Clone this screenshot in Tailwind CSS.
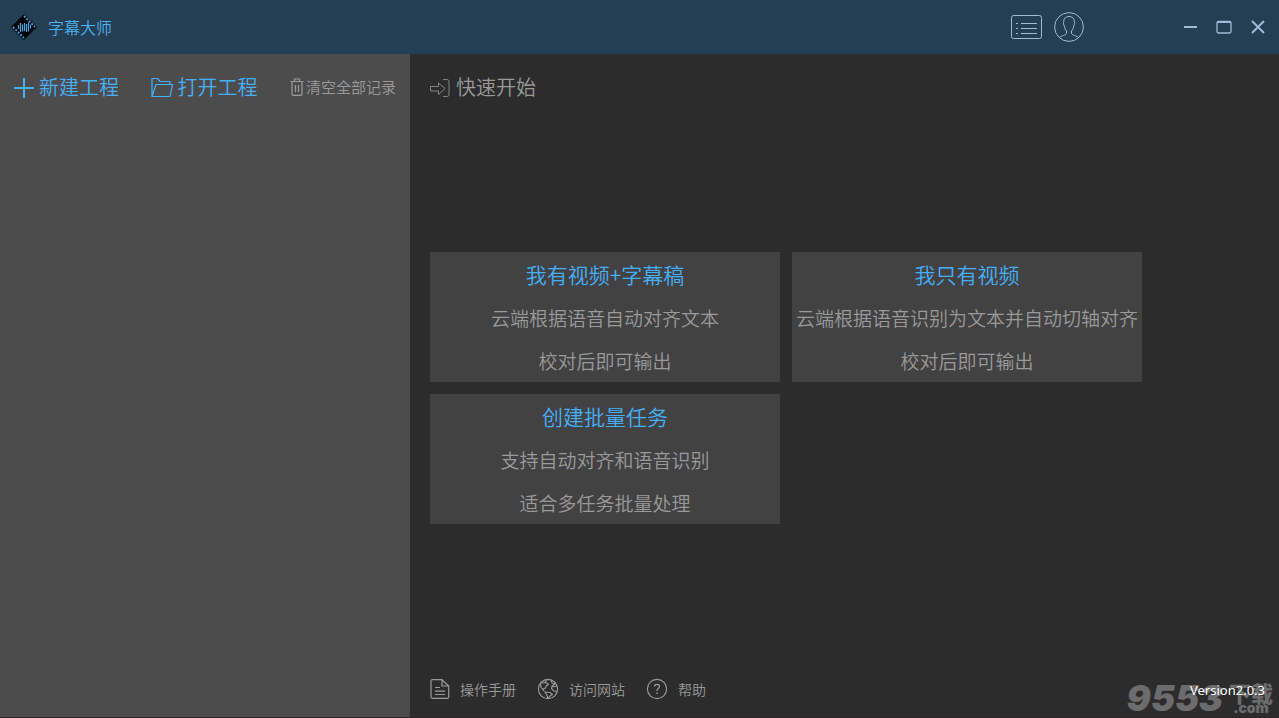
<!DOCTYPE html>
<html lang="zh-CN">
<head>
<meta charset="utf-8">
<meta name="viewport" content="width=device-width, initial-scale=1">
<title>字幕大师</title>
<script src="https://cdn.jsdelivr.net/npm/@tailwindcss/browser@4"></script>
</head>
<body class="flex h-screen min-h-[560px] flex-col overflow-hidden bg-[#2c2c2c] font-['Noto_Sans_CJK_SC',sans-serif] font-[350] text-[#9a9a9a]">
<header class="flex h-[54px] shrink-0 items-center bg-[#243e54] pr-3 pl-2.5">
  <svg class="size-7" viewBox="0 0 28 28" fill="none" aria-hidden="true">
    <path d="M14 1 27 14 14 27 1 14Z" fill="#020407"/>
    <path d="M14 3 25 14M3 14 14 25" stroke="#4aa3e0" stroke-width="1.800" stroke-dasharray="2 1.500"/>
    <path d="M8.500 12v4M10.500 10v9M12.500 11.500v7M14.500 10v8M16.500 11v8M18.500 9.500v9M20.500 11.500v4" stroke="#4aa3e0" stroke-width="1.200"/>
  </svg>
  <h1 class="ml-2.5 text-base text-[#4fb0ee]">字幕大师</h1>
  <div class="ml-auto flex items-center text-[#9dbdd6]">
    <button type="button" aria-label="列表" class="mr-3">
      <svg class="h-6 w-8" viewBox="0 0 32 24" fill="none" stroke="currentColor">
        <rect x="1.500" y=".5" width="30" height="23" rx="2"/>
        <path d="M6 8.500h2M11 8.500h16M6 13.500h2M11 13.500h16M6 18.500h2M11 18.500h16"/>
      </svg>
    </button>
    <button type="button" aria-label="账户" class="mr-[97px]">
      <svg class="size-[30px]" viewBox="0 0 30 30" fill="none" stroke="currentColor">
        <circle cx="15" cy="15" r="14.400"/>
        <path d="M5.500 25.500C7 23.500 12.500 23.500 12.500 21V19C10.500 17 10.500 14.500 10 13C9 12 9.500 10.500 9.700 9.500C9.700 6 12 4.500 15 4.500S20.300 6 20.300 9.500C20.500 10.500 21 12 20 13C19.500 14.500 19.500 17 17.500 19V21C17.500 23.500 23 23.500 24.500 25.500"/>
      </svg>
    </button>
    <button type="button" aria-label="最小化" class="mr-4">
      <svg class="size-[18px]" viewBox="0 0 18 18" stroke="currentColor" stroke-width="2"><path d="M3 9h13"/></svg>
    </button>
    <button type="button" aria-label="最大化" class="mr-4">
      <svg class="size-[18px]" viewBox="0 0 18 18" fill="none" stroke="currentColor" stroke-width="1.300"><rect x="2" y="3.500" width="14" height="11.500" rx="1.500"/><path d="M2 4h14" stroke-width="2"/></svg>
    </button>
    <button type="button" aria-label="关闭">
      <svg class="size-[18px]" viewBox="0 0 18 18" stroke="currentColor" stroke-width="2"><path d="m3 3 12 12M15 3 3 15"/></svg>
    </button>
  </div>
</header>
<div class="flex min-h-0 flex-1">
  <aside class="w-[410px] shrink-0 bg-[#4c4c4c]">
    <div class="flex items-center justify-between pt-[17px] pr-[14px] pl-[13px]">
      <button type="button" class="flex items-center gap-1 text-xl leading-8 text-[#45b0f9]">
        <svg class="size-[22px]" viewBox="0 0 22 22" stroke="currentColor" stroke-width="2"><path d="M1 12h20M11 2v20"/></svg>
        新建工程
      </button>
      <button type="button" class="flex items-center gap-1 text-xl leading-8 text-[#45b0f9]">
        <svg class="size-[22px]" viewBox="0 0 22 22" fill="none" stroke="currentColor" stroke-width="1.200" stroke-linejoin="round"><path d="M1 20.500V2.500h5.500l2.500 3h10v3M1 20.500 5 8.500h16.500l-2.500 12Z"/></svg>
        打开工程
      </button>
      <button type="button" class="flex items-center gap-0.5 text-[15px] leading-8">
        <svg class="h-[18px] w-3.5" viewBox="0 0 14 18" fill="none" stroke="currentColor" stroke-width="1.200"><path d="M.5 3.500h13M4.500 3.500V1h5v2.500M2 3.500V16q0 1.300 1.300 1.300h7.400Q12 17.300 12 16V3.500M5.500 7v7M8.500 7v7"/></svg>
        清空全部记录
      </button>
    </div>
  </aside>
  <main class="relative flex min-w-0 flex-1 flex-col px-5">
    <h2 class="flex items-center gap-1.5 pt-[17px] text-xl leading-8">
      <svg class="size-5" viewBox="0 0 20 20" fill="none" stroke="currentColor"><path d="M.5 9.500h8V6l6.500 5.500-6.500 6V14h-8ZM13 2.500h4q2 0 2 2v13q0 2-2 2h-4" stroke-opacity=".8"/></svg>
      快速开始
    </h2>
    <div class="flex flex-1 items-center pt-3">
      <div class="flex max-w-[720px] flex-wrap gap-3 text-center text-[19px]">
        <button type="button" class="h-[130px] w-[350px] bg-[#424242] leading-[43px]">
          <span class="block text-[21px] text-[#45b0f9]">我有视频+字幕稿</span>
          <span class="block">云端根据语音自动对齐文本</span>
          <span class="block">校对后即可输出</span>
        </button>
        <button type="button" class="h-[130px] w-[350px] bg-[#424242] leading-[43px]">
          <span class="block text-[21px] text-[#45b0f9]">我只有视频</span>
          <span class="block whitespace-nowrap">云端根据语音识别为文本并自动切轴对齐</span>
          <span class="block">校对后即可输出</span>
        </button>
        <button type="button" class="h-[130px] w-[350px] bg-[#424242] leading-[43px]">
          <span class="block text-[21px] text-[#45b0f9]">创建批量任务</span>
          <span class="block">支持自动对齐和语音识别</span>
          <span class="block">适合多任务批量处理</span>
        </button>
      </div>
    </div>
    <footer class="flex h-14 items-center gap-[21px] text-sm">
      <a href="#" class="flex items-center gap-2.5">
        <svg class="size-5" viewBox="0 0 20 20" fill="none" stroke="currentColor" stroke-width="1.200"><path d="M12 .7H2.500Q1 .7 1 2.200v15.600q0 1.500 1.500 1.500h15q1.200 0 1.200-1.200V7L12 .7V7h6.500M5 8.500h5M5 12.200h10M5 15.500h10"/></svg>
        操作手册
      </a>
      <a href="#" class="flex items-center gap-2.5">
        <svg class="size-[22px]" viewBox="0 0 22 22" fill="none" stroke="currentColor" stroke-width="1.100" stroke-linejoin="round"><circle cx="11" cy="11" r="9.600"/><path d="M3.500 5 9 4.500l2.500 2L9 8l-.5 2L6 11l1 2-3-3.500-.5-4.500M8 4.500 10 1.500M14 2l1 3 3 1-3 2-.5 2.500L17 13l3 .5M17 6l1.500-2M15 9l5-1M8 14l5 .5 2.500 2L13 18l-2 2.500-1-3Z"/></svg>
        访问网站
      </a>
      <a href="#" class="flex items-center gap-2.5">
        <svg class="size-[22px]" viewBox="0 0 22 22" fill="none" stroke="currentColor" stroke-width="1.100"><circle cx="11" cy="11" r="9.600"/><path d="M8.500 8.500Q8.500 6.300 11 6.300t2.500 2.200C13.500 10.300 11 10.300 11 13M11 14.500v1.500" stroke-width="1.300"/></svg>
        帮助
      </a>
    </footer>
    <div class="absolute right-[6px] bottom-[5px] flex items-end gap-1.5 text-[#6c6c6c]" aria-hidden="true">
      <span class="font-['Inter',sans-serif] text-4xl leading-7 font-black italic">9553</span>
      <span class="flex flex-col items-center gap-1">
        <span class="text-[22px] leading-4 font-black">下载</span>
        <span class="font-['Inter',sans-serif] text-sm leading-2 font-black">.com</span>
      </span>
    </div>
    <p class="absolute right-[14px] bottom-[17px] font-['Noto_Sans',sans-serif] text-[13px] leading-5 font-normal text-white">Version2.0.3</p>
  </main>
</div>
<div class="h-px shrink-0 bg-[#31222a]"></div>
</body>
</html>
